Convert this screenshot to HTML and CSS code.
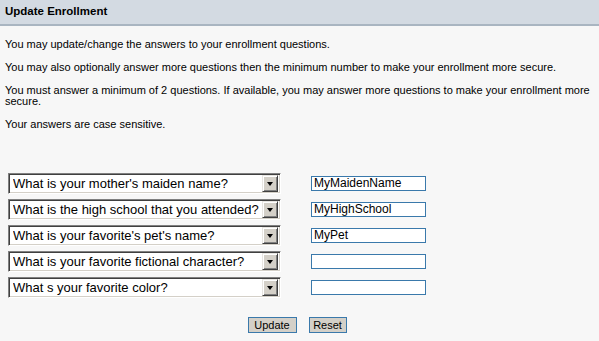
FILE: index.html
```html
<!DOCTYPE html>
<html>
<head>
<meta charset="utf-8">
<link rel="stylesheet" href="styles.css">
</head>
<body>
<div class="header">Update Enrollment</div>
<div class="content">
  <p>You may update/change the answers to your enrollment questions.</p>
  <p>You may also optionally answer more questions then the minimum number to make your enrollment more secure.</p>
  <p>You must answer a minimum of 2 questions. If available, you may answer more questions to make your enrollment more secure.</p>
  <p>Your answers are case sensitive.</p>
  <div class="form">
    <div class="row">
      <div class="select"><span class="sel-text">What is your mother's maiden name?</span><span class="arrow"><span class="tri"></span></span></div>
      <div class="input">MyMaidenName</div>
    </div>
    <div class="row">
      <div class="select"><span class="sel-text">What is the high school that you attended?</span><span class="arrow"><span class="tri"></span></span></div>
      <div class="input">MyHighSchool</div>
    </div>
    <div class="row">
      <div class="select"><span class="sel-text">What is your favorite's pet's name?</span><span class="arrow"><span class="tri"></span></span></div>
      <div class="input">MyPet</div>
    </div>
    <div class="row">
      <div class="select"><span class="sel-text">What is your favorite fictional character?</span><span class="arrow"><span class="tri"></span></span></div>
      <div class="input"></div>
    </div>
    <div class="row">
      <div class="select"><span class="sel-text">What s your favorite color?</span><span class="arrow"><span class="tri"></span></span></div>
      <div class="input"></div>
    </div>
    <div class="buttons">
      <span class="btn btn-update">Update</span>
      <span class="btn btn-reset">Reset</span>
    </div>
  </div>
</div>
</body>
</html>
```

FILE: styles.css
```css
html, body {
  margin: 0;
  padding: 0;
  background: #f7f7f7;
  font-family: "Liberation Sans", Arial, sans-serif;
  color: #000;
}

.header {
  height: 24px;
  line-height: 23px;
  background: #d3dae2;
  border-bottom: 2px solid #a9b5c1;
  padding-left: 5px;
  font-weight: bold;
  font-size: 11.5px;
}

.content {
  padding: 13px 0 0 5px;
}

.content p {
  margin: 0 0 12px 0;
  font-size: 11px;
  line-height: 11px;
}

.form {
  margin-top: 43px;
  padding-left: 3px;
  display: flex;
  flex-direction: column;
  gap: 5px;
}

.row {
  display: flex;
  align-items: center;
  gap: 30px;
  height: 21px;
}

.select {
  box-sizing: border-box;
  width: 273px;
  height: 21px;
  background: #fff;
  border-top: 1px solid #808080;
  border-left: 1px solid #808080;
  border-right: 1px solid #fff;
  border-bottom: 1px solid #fff;
  box-shadow: inset 1px 1px 0 #404040, inset -1px -1px 0 #d4d0c8;
  display: flex;
  align-items: center;
  padding: 2px 2px 2px 4px;
}

.sel-text {
  flex: 1;
  font-size: 13px;
  white-space: nowrap;
  overflow: hidden;
  line-height: 17px;
}

.arrow {
  box-sizing: border-box;
  flex: none;
  width: 16px;
  height: 17px;
  background: #d4d0c8;
  border-top: 1px solid #e8e6e2;
  border-left: 1px solid #e8e6e2;
  border-right: 1px solid #404040;
  border-bottom: 1px solid #404040;
  box-shadow: inset 1px 1px 0 #fff, inset -1px -1px 0 #808080;
  display: flex;
  align-items: center;
  justify-content: center;
}

.tri {
  width: 0;
  height: 0;
  border-left: 3.5px solid transparent;
  border-right: 3.5px solid transparent;
  border-top: 4px solid #000;
}

.input {
  box-sizing: border-box;
  width: 115px;
  height: 15px;
  background: #fff;
  border: 1px solid #3a79ab;
  font-size: 12px;
  line-height: 13px;
  padding-left: 2px;
}

.buttons {
  margin-top: 14px;
  display: flex;
  justify-content: center;
  gap: 12px;
  padding-right: 13px;
}

.btn {
  box-sizing: border-box;
  height: 16px;
  background: #d4d0c8;
  border: 1px solid #3a79ab;
  font-size: 11px;
  line-height: 14px;
  text-align: center;
}

.btn-update { width: 49px; }
.btn-reset { width: 38px; }
```
